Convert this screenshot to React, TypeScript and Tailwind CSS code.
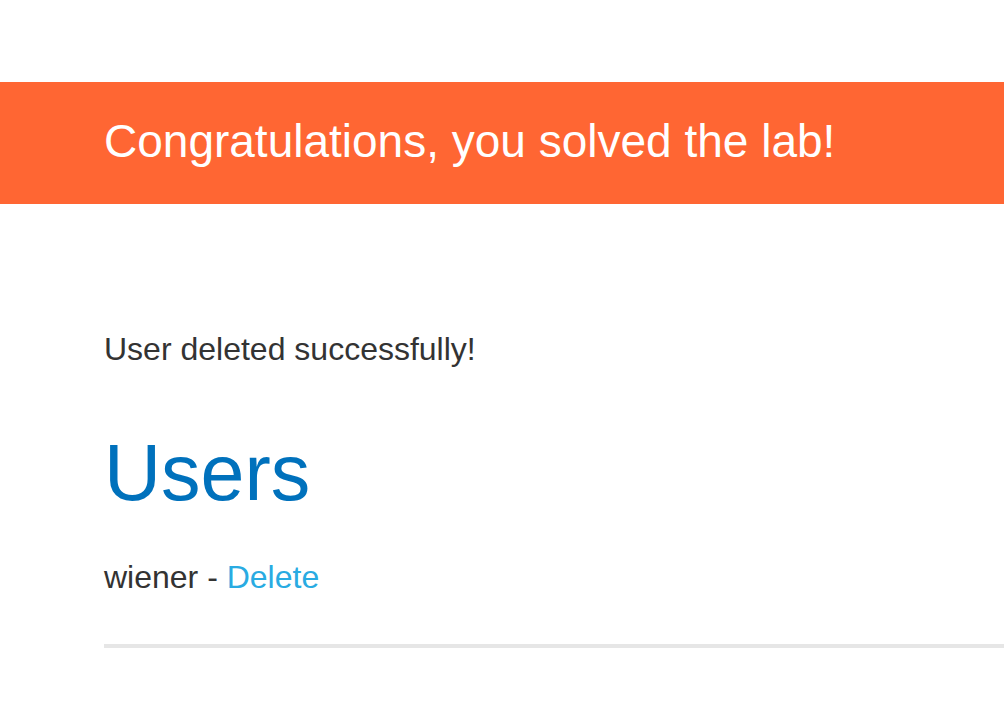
export default function App() {
  return (
    <div className="min-h-[722px] bg-white font-['Liberation_Sans',Arial,sans-serif]">
      <div className="h-[82px]" />
      <div className="flex h-[122px] items-center bg-[#ff6633] pb-[3px] pl-[104px]">
        <h4 className="text-[46px] leading-[53px] text-white">Congratulations, you solved the lab!</h4>
      </div>
      <div className="flex flex-col pl-[104px]">
        <p className="mt-[125px] text-[32px] leading-[40px] text-[#333333]">User deleted successfully!</p>
        <h1 className="mt-[56px] text-[79px] leading-[96px] text-[#0071bc]">Users</h1>
        <div className="mt-[36px] text-[32px] leading-[40px] text-[#333333]">
          <span>wiener - </span>
          <a href="#" className="text-[#29abe2]">Delete</a>
        </div>
        <div className="mt-[47px] h-[4px] bg-[#e6e6e6]" />
      </div>
    </div>
  );
}
